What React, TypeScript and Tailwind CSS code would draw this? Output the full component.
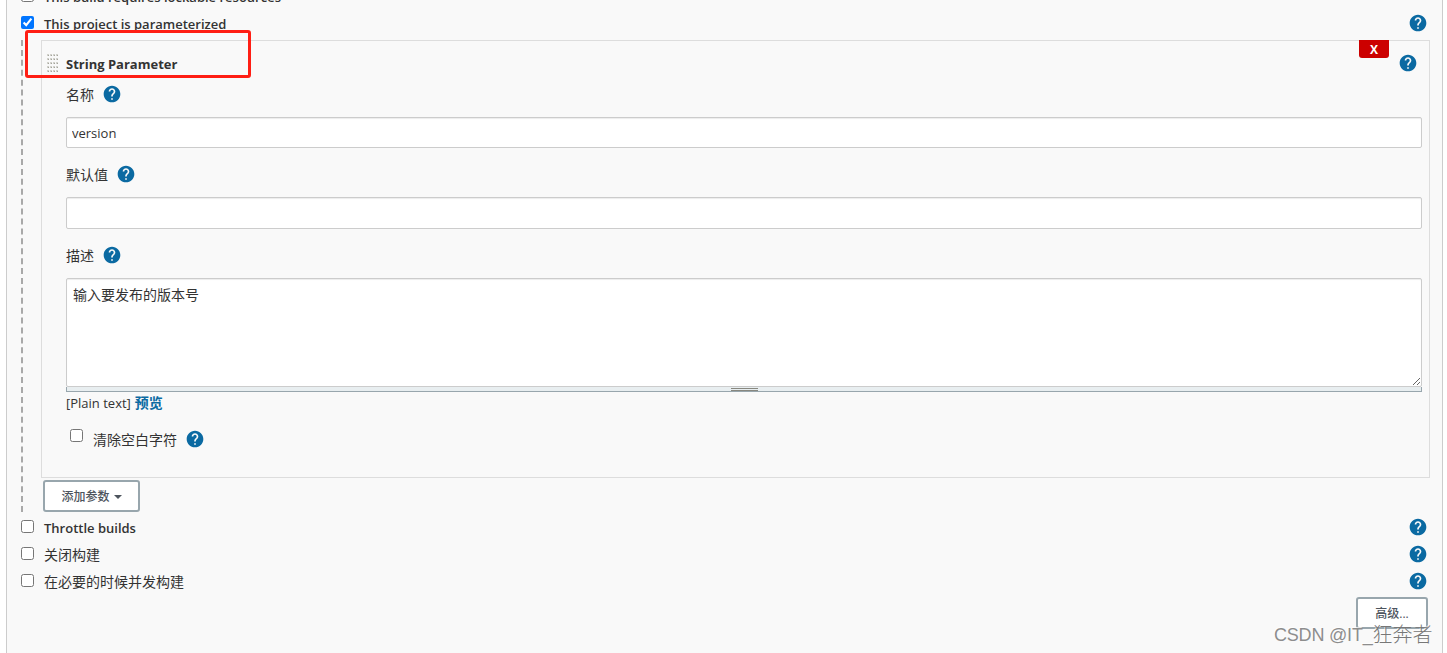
import { FunctionComponent } from "react";
import { MdHelp } from "react-icons/md";

const Help: FunctionComponent = (): JSX.Element => (
  <MdHelp size={20} className="shrink-0 text-[#0b6aa2]" />
);

const OptionRow: FunctionComponent<{
  label: string;
  checked?: boolean;
  help?: boolean;
  weight?: string;
}> = ({
  label,
  checked,
  help = true,
  weight = "text-[13px] font-semibold mt-0.5",
}): JSX.Element => {
  return (
    <div className="flex h-[27px] items-center justify-between pl-3.5 pr-3.5">
      <label className="flex items-center">
        <input
          type="checkbox"
          defaultChecked={checked}
          className="mb-[3px] size-[13px] shrink-0"
        />
        <span className={`ml-2.5 whitespace-nowrap ${weight}`}>{label}</span>
      </label>
      {help && (
        <div className="mb-0.5">
          <Help />
        </div>
      )}
    </div>
  );
};

const FieldLabel: FunctionComponent<{ label: string }> = ({
  label,
}): JSX.Element => (
  <div className="flex h-5 items-center gap-2">
    <span className="mt-0.5">{label}</span>
    <Help />
  </div>
);

const DragHandle: FunctionComponent = (): JSX.Element => (
  <svg width="12" height="20" className="shrink-0">
    <defs>
      <pattern id="dots" width="3" height="4" patternUnits="userSpaceOnUse">
        <rect width="2" height="2" fill="#d2d2cc" />
        <rect x="1" y="1" width="1" height="1" fill="#a4a49c" />
      </pattern>
    </defs>
    <rect width="12" height="20" fill="url(#dots)" />
  </svg>
);

const StringParameter: FunctionComponent = (): JSX.Element => {
  return (
    <div className="h-[438px] w-[1389px] border border-[#ddd] pl-[5px] pr-[7px]">
      <div className="flex h-[42px] items-start">
        <div className="mt-[13px] flex h-5 items-center gap-[7px]">
          <DragHandle />
          <span className="text-[13px] font-bold">String Parameter</span>
        </div>
        <button className="-mt-px ml-auto flex h-[18px] w-[30px] items-center justify-center rounded-b-[3px] bg-[#c00] pt-0.5 text-xs font-bold text-white">
          X
        </button>
        <div className="ml-[9px] mr-1 mt-3">
          <Help />
        </div>
      </div>
      <div className="flex flex-col pl-[19px]">
        <div className="mt-px">
          <FieldLabel label="名称" />
        </div>
        <input
          defaultValue="version"
          className="mt-[13px] h-[31px] rounded-[2px] border border-[#ccc] bg-white px-[5px] pt-px text-[13px] shadow-[inset_0_1px_1px_rgba(0,0,0,0.075)]"
        />
        <div className="mt-4">
          <FieldLabel label="默认值" />
        </div>
        <input className="mt-[13px] h-8 rounded-[2px] border border-[#ccc] bg-white px-[5px] shadow-[inset_0_1px_1px_rgba(0,0,0,0.075)]" />
        <div className="mt-4">
          <FieldLabel label="描述" />
        </div>
        <textarea
          defaultValue="输入要发布的版本号"
          className="mt-[13px] h-[109px] rounded-[2px] border border-[#ccc] bg-white px-1.5 py-1.5 leading-5 shadow-[inset_0_1px_1px_rgba(0,0,0,0.075)]"
        />
        <div className="flex h-[5px] flex-col items-center border border-t-0 border-[#98a6ad] bg-[#e8eef0]">
          <div className="mt-px h-[3px] w-[27px] shrink-0 border-y border-[#888880]" />
        </div>
        <div className="mt-px flex h-5 items-center gap-1">
          <span className="text-[13px]">[Plain text]</span>
          <a className="font-bold text-[#0b6aa2]">预览</a>
        </div>
        <div className="mt-4 flex h-5 items-center">
          <input type="checkbox" className="mb-[7px] ml-1 size-[13px]" />
          <span className="ml-2.5 mr-2 mt-0.5">清除空白字符</span>
          <Help />
        </div>
      </div>
    </div>
  );
};

export default function App() {
  return (
    <div className="relative h-[653px] w-[1447px] overflow-hidden bg-white pl-1.5 font-['Open_Sans','Noto_Sans_CJK_SC',sans-serif] text-sm text-[#333]">
      <div className="flex h-full w-[1437px] flex-col border-x border-[#ccc] bg-[#f9f9f9]">
        <div className="-mt-[17px]">
          <OptionRow label="This build requires lockable resources" help={false} />
        </div>
        <OptionRow label="This project is parameterized" checked />
        <div className="ml-3.5 mt-[3px] h-[472px] shrink-0 border-l-2 border-dashed border-[#a9a9a9] pl-[18px]">
          <StringParameter />
          <button className="ml-0.5 mt-0.5 flex h-8 w-[97px] items-center justify-center gap-1 rounded-[3px] border-2 border-[#98a6ad] bg-white pt-px text-xs font-medium text-[#4d545d]">
            添加参数
            <svg width="8" height="4" viewBox="0 0 8 4">
              <path d="M0 0h8L4 4z" fill="currentColor" />
            </svg>
          </button>
        </div>
        <div className="mt-0.5">
          <OptionRow label="Throttle builds" />
          <OptionRow label="关闭构建" weight="mt-px font-normal" />
          <OptionRow label="在必要的时候并发构建" weight="mt-px font-normal" />
        </div>
        <button className="ml-auto mr-3.5 mt-0.5 flex h-8 w-[72px] shrink-0 items-center justify-center rounded-[3px] border-2 border-[#98a6ad] bg-white pt-0.5 text-xs font-medium text-[#4d545d]">
          高级...
        </button>
      </div>
      <div className="absolute left-[25px] top-[30px] h-12 w-[226px] rounded-[3px] border-3 border-[#ff1e14]" />
      <div className="absolute left-[1274px] top-[623px] flex items-center whitespace-nowrap font-['Liberation_Sans','Noto_Sans_CJK_SC',sans-serif] text-[18px] leading-6 text-[#8d8d8d] [text-shadow:-1px_-1px_0_rgba(255,255,255,0.7)]">
        <span className="whitespace-pre tracking-[-0.2px]">CSDN @IT_</span>
        <span className="text-[20px] font-light text-[#777]">狂奔者</span>
      </div>
    </div>
  );
}
